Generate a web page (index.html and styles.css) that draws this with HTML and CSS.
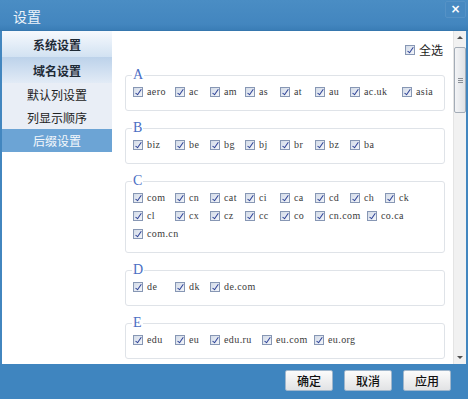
FILE: index.html
```html
<!DOCTYPE html>
<html lang="zh-CN">
<head>
<meta charset="utf-8">
<title>设置</title>
<link rel="stylesheet" href="styles.css">
</head>
<body>
<div class="window">
  <header class="titlebar">
    <span class="title">设置</span>
    <span class="close">×</span>
  </header>
  <div class="body">
    <nav class="sidebar">
      <div class="nav-head head-sys">系统设置</div>
      <div class="nav-head head-domain">域名设置</div>
      <div class="nav-item">默认列设置</div>
      <div class="nav-item">列显示顺序</div>
      <div class="nav-item active">后缀设置</div>
    </nav>
    <main class="content">
      <div class="select-all"><span class="cb"></span><span class="sa-text">全选</span></div>

      <fieldset class="group">
        <legend>A</legend>
        <div class="row">
          <span class="item"><span class="cb"></span><span class="lbl">aero</span></span>
          <span class="item"><span class="cb"></span><span class="lbl">ac</span></span>
          <span class="item"><span class="cb"></span><span class="lbl">am</span></span>
          <span class="item"><span class="cb"></span><span class="lbl">as</span></span>
          <span class="item"><span class="cb"></span><span class="lbl">at</span></span>
          <span class="item"><span class="cb"></span><span class="lbl">au</span></span>
          <span class="item wide"><span class="cb"></span><span class="lbl">ac.uk</span></span>
          <span class="item"><span class="cb"></span><span class="lbl">asia</span></span>
        </div>
      </fieldset>

      <fieldset class="group">
        <legend>B</legend>
        <div class="row">
          <span class="item"><span class="cb"></span><span class="lbl">biz</span></span>
          <span class="item"><span class="cb"></span><span class="lbl">be</span></span>
          <span class="item"><span class="cb"></span><span class="lbl">bg</span></span>
          <span class="item"><span class="cb"></span><span class="lbl">bj</span></span>
          <span class="item"><span class="cb"></span><span class="lbl">br</span></span>
          <span class="item"><span class="cb"></span><span class="lbl">bz</span></span>
          <span class="item"><span class="cb"></span><span class="lbl">ba</span></span>
        </div>
      </fieldset>

      <fieldset class="group">
        <legend>C</legend>
        <div class="row">
          <span class="item"><span class="cb"></span><span class="lbl">com</span></span>
          <span class="item"><span class="cb"></span><span class="lbl">cn</span></span>
          <span class="item"><span class="cb"></span><span class="lbl">cat</span></span>
          <span class="item"><span class="cb"></span><span class="lbl">ci</span></span>
          <span class="item"><span class="cb"></span><span class="lbl">ca</span></span>
          <span class="item"><span class="cb"></span><span class="lbl">cd</span></span>
          <span class="item"><span class="cb"></span><span class="lbl">ch</span></span>
          <span class="item"><span class="cb"></span><span class="lbl">ck</span></span>
        </div>
        <div class="row">
          <span class="item"><span class="cb"></span><span class="lbl">cl</span></span>
          <span class="item"><span class="cb"></span><span class="lbl">cx</span></span>
          <span class="item"><span class="cb"></span><span class="lbl">cz</span></span>
          <span class="item"><span class="cb"></span><span class="lbl">cc</span></span>
          <span class="item"><span class="cb"></span><span class="lbl">co</span></span>
          <span class="item wide"><span class="cb"></span><span class="lbl">cn.com</span></span>
          <span class="item"><span class="cb"></span><span class="lbl">co.ca</span></span>
        </div>
        <div class="row">
          <span class="item"><span class="cb"></span><span class="lbl">com.cn</span></span>
        </div>
      </fieldset>

      <fieldset class="group">
        <legend>D</legend>
        <div class="row">
          <span class="item"><span class="cb"></span><span class="lbl">de</span></span>
          <span class="item"><span class="cb"></span><span class="lbl">dk</span></span>
          <span class="item"><span class="cb"></span><span class="lbl">de.com</span></span>
        </div>
      </fieldset>

      <fieldset class="group">
        <legend>E</legend>
        <div class="row">
          <span class="item"><span class="cb"></span><span class="lbl">edu</span></span>
          <span class="item"><span class="cb"></span><span class="lbl">eu</span></span>
          <span class="item wide"><span class="cb"></span><span class="lbl">edu.ru</span></span>
          <span class="item wide"><span class="cb"></span><span class="lbl">eu.com</span></span>
          <span class="item"><span class="cb"></span><span class="lbl">eu.org</span></span>
        </div>
      </fieldset>
    </main>
    <div class="scrollbar">
      <div class="sb-btn"><span class="arrow-up"></span></div>
      <div class="sb-track">
        <div class="sb-thumb"><span class="grip"></span></div>
      </div>
      <div class="sb-btn"><span class="arrow-down"></span></div>
    </div>
  </div>
  <footer class="footer">
    <button class="btn">确定</button>
    <button class="btn">取消</button>
    <button class="btn">应用</button>
  </footer>
</div>
</body>
</html>
```

FILE: styles.css
```css
* { box-sizing: border-box; }
html, body { margin: 0; padding: 0; }
body {
  width: 468px;
  height: 399px;
  overflow: hidden;
  font-family: "Noto Sans CJK SC", "Noto Sans", sans-serif;
  font-size: 12px;
  color: #1b1b1b;
}
.window {
  width: 468px;
  height: 399px;
  background: #4286bf;
  display: flex;
  flex-direction: column;
}

/* title bar */
.titlebar {
  height: 31px;
  flex: none;
  display: flex;
  align-items: center;
  justify-content: space-between;
  padding-left: 13px;
  background: linear-gradient(#4a8dc4, #4386bf 80%, #3a7db6);
  border-bottom: 1px solid #3677ae;
}
.title {
  color: #edf3fa;
  font-size: 14px;
  line-height: 16px;
  margin-top: 1px;
}
.close {
  align-self: flex-start;
  margin: 1px 2px 0 0;
  width: 21px;
  height: 17px;
  border: 1px solid #5592c6;
  border-radius: 2px;
  background: #4789c1;
  color: #ffffff;
  font-family: "DejaVu Sans", sans-serif;
  font-weight: bold;
  font-size: 12px;
  line-height: 14px;
  text-align: center;
}

/* body */
.body {
  height: 333px;
  flex: none;
  margin: 0 2px;
  background: #ffffff;
  display: flex;
}
.sidebar {
  width: 110px;
  flex: none;
  background: #ffffff;
}
.nav-head {
  height: 26px;
  display: flex;
  align-items: center;
  justify-content: center;
  font-weight: bold;
  font-size: 12px;
  color: #1e2a36;
}
.head-sys {
  background: linear-gradient(#f6f9fd, #d2e2f2);
}
.head-domain {
  background: linear-gradient(#bcd2ea, #e2ebf6);
}
.nav-item {
  height: 23px;
  display: flex;
  align-items: center;
  justify-content: center;
  background: #e9eef6;
  font-size: 12px;
  color: #222;
}
.nav-item.active {
  background: #6ca4d5;
  color: #f4f8fc;
}

/* content */
.content {
  flex: 1;
  min-width: 0;
  padding: 13px 8px 0 13px;
  overflow: hidden;
}
.select-all {
  display: flex;
  justify-content: flex-end;
  align-items: center;
  height: 12px;
  margin-right: 2px;
  margin-bottom: 12px;
}
.sa-text {
  margin-left: 4px;
  font-size: 12px;
  line-height: 12px;
}
.group {
  margin: 0 0 10px 0;
  padding: 2px 6px 10px 7px;
  border: 1px solid #dfe3e8;
  border-radius: 3px;
  min-width: 0;
}
.group legend {
  padding: 0 1px;
  margin-left: -1px;
  font-family: "Liberation Serif", serif;
  font-size: 14px;
  line-height: 14px;
  color: #4a6dc3;
}
.row {
  display: flex;
  align-items: center;
  height: 16px;
}
.row + .row {
  margin-top: 2px;
}
.item {
  flex: none;
  width: 35px;
  display: flex;
  align-items: center;
}
.row .item:first-child { width: 42px; }
.item.wide { width: 52px; }
.lbl {
  margin-left: 4px;
  font-family: "Liberation Serif", "Times New Roman", serif;
  font-size: 10px;
  line-height: 12px;
  letter-spacing: 0.4px;
  color: #3a3a3a;
  white-space: nowrap;
}
.cb {
  flex: none;
  position: relative;
  width: 10px;
  height: 10px;
  border: 1px solid #8797b4;
  background: linear-gradient(135deg, #d3dbe8, #f3f5f9);
}
.cb::after {
  content: "";
  position: absolute;
  left: 3px;
  top: 0px;
  width: 2px;
  height: 6px;
  border: solid #2c4197;
  border-width: 0 1.5px 1.5px 0;
  transform: rotate(35deg);
}

/* scrollbar */
.scrollbar {
  width: 13px;
  flex: none;
  display: flex;
  flex-direction: column;
  background: #f1f1f1;
  border-left: 1px solid #e4e4e4;
}
.sb-btn {
  height: 13px;
  flex: none;
  display: flex;
  align-items: center;
  justify-content: center;
}
.arrow-up {
  width: 0; height: 0;
  border-left: 3px solid transparent;
  border-right: 3px solid transparent;
  border-bottom: 3px solid #505050;
}
.arrow-down {
  width: 0; height: 0;
  border-left: 3px solid transparent;
  border-right: 3px solid transparent;
  border-top: 3px solid #505050;
}
.sb-track {
  flex: 1;
  padding: 3px 0 0 0;
}
.sb-thumb {
  height: 66px;
  border: 1px solid #a3acb7;
  border-radius: 2px;
  background: linear-gradient(90deg, #f3f4f6, #dfe2e6);
  display: flex;
  align-items: center;
  justify-content: center;
}
.grip {
  width: 5px;
  height: 5px;
  border-top: 1px solid #8a8f96;
  border-bottom: 1px solid #8a8f96;
  position: relative;
}
.grip::after {
  content: "";
  position: absolute;
  left: 0; right: 0; top: 1px;
  border-top: 1px solid #8a8f96;
}

/* footer */
.footer {
  flex: 1;
  display: flex;
  justify-content: flex-end;
  align-items: flex-start;
  gap: 11px;
  padding: 6px 17px 0 0;
  background: #3f85bf;
}
.btn {
  width: 48px;
  height: 21px;
  padding: 0;
  border: 1px solid #9fb6cc;
  border-radius: 2px;
  background: linear-gradient(#fbfbfb, #e2e3e5);
  font-family: "Noto Sans CJK SC", sans-serif;
  font-size: 12px;
  font-weight: 500;
  color: #111;
}
```
